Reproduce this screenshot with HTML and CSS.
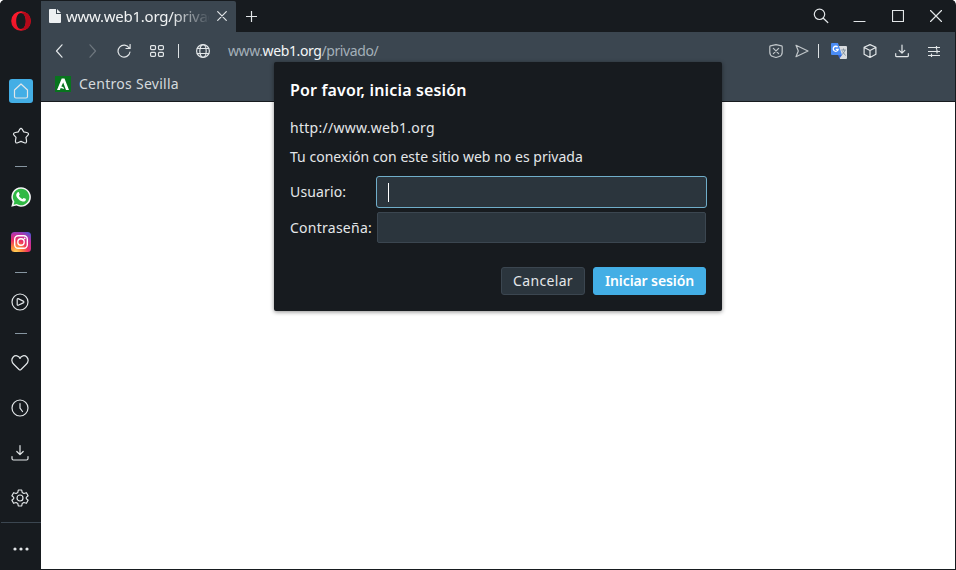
FILE: index.html
```html
<!DOCTYPE html>
<html lang="es">
<head>
<meta charset="utf-8">
<title>www.web1.org/privado/</title>
<link rel="stylesheet" href="styles.css">
</head>
<body>
<div class="window">
  <nav class="sidebar">
    <div class="logo"><svg width="20" height="20" viewBox="0 0 20 20"><defs><linearGradient id="op" x1="0" y1="0" x2="0" y2="1"><stop offset="0" stop-color="#ff1b2d"/><stop offset="1" stop-color="#e81428"/></linearGradient></defs><path fill="url(#op)" fill-rule="evenodd" d="M10 .2a9.800 9.800 0 1 0 0 19.600A9.800 9.800 0 1 0 10 .2zM10 2c2.900 0 4.800 3.400 4.800 8s-1.900 8-4.800 8-4.800-3.400-4.800-8S7.100 2 10 2z"/><path fill="#b50819" d="M10 2C12 .6 15 1 17 3c3.700 4 3.700 10 0 14-2 2-5 2.400-7 1 2.900 0 4.800-3.400 4.800-8S12.900 2 10 2z"/></svg></div>
    <div class="cell"><span class="home"><svg class="line" width="18" height="18" viewBox="0 0 18 18"><path d="M2.500 8 9 2l6.500 6v6.500q0 1.500-1.500 1.500H4q-1.500 0-1.500-1.500z"/></svg></span></div>
    <div class="cell"><svg class="line" width="18" height="18" viewBox="0 0 18 18"><path d="M9 1.300c.7 0 1 .5 1.300 1.100l1.300 2.400 3 .7c1.800.4 2.500 1.400 1.400 2.600l-2 2.200.5 3.200c.3 2-.5 3-2.200 2.200L9 14.400l-3.300 1.300c-1.700.8-2.500-.2-2.200-2.200l.5-3.200-2-2.200C.9 6.900 1.600 5.900 3.400 5.500l3-.7 1.300-2.400C8 1.800 8.300 1.300 9 1.300z"/></svg></div>
    <div class="dash"></div>
    <div class="cell"><svg width="20" height="20" viewBox="0 0 20 20"><path fill="#f4f5f5" d="M10 .2a9.800 9.800 0 1 1-4.600 18.400L.3 19.800l1.300-5A9.800 9.800 0 0 1 10 .2z"/><path fill="#30b944" d="M10 1.800a8.200 8.200 0 1 1-4.300 15.100l-3.100.8.8-3A8.200 8.200 0 0 1 10 1.800z"/><path fill="#fff" d="M6.700 5.300c.4-.4 1-.4 1.200.1l.8 1.900c.1.500-.7 1.200-.8 1.500.6 1.400 1.800 2.500 3.400 3.200.4-.1 1-1.200 1.400-1.100l2 .9c.5.300.1 1.700-.5 2.200-.8.700-2 .8-3.300.3-2.700-.9-5-3.200-5.600-5.300-.3-1.500.5-2.900 1.400-3.700z"/></svg></div>
    <div class="cell"><svg width="20" height="20" viewBox="0 0 20 20"><defs><radialGradient id="ig" cx=".25" cy="1" r="1.150"><stop offset="0" stop-color="#ffd557"/><stop offset=".25" stop-color="#fc8b3c"/><stop offset=".52" stop-color="#ed315f"/><stop offset=".78" stop-color="#bd32a5"/><stop offset="1" stop-color="#5353d0"/></radialGradient></defs><rect width="20" height="20" rx="3.500" fill="url(#ig)"/><g fill="none" stroke="#fff" stroke-width="1.400"><rect x="3.700" y="3.700" width="12.600" height="12.600" rx="3.500"/><circle cx="10" cy="10" r="3.200"/></g><circle cx="13.700" cy="6.300" r=".9" fill="#fff"/></svg></div>
    <div class="dash"></div>
    <div class="cell thin"><svg class="line" width="18" height="18" viewBox="0 0 18 18"><circle cx="9" cy="9" r="8"/><path d="M6.200 6.300q0-1 1-.7l5 2.500q1.400.9 0 1.800l-5 2.300q-1 .3-1-.7z"/></svg></div>
    <div class="dash"></div>
    <div class="cell thin"><svg class="line" width="18" height="18" viewBox="0 0 18 18"><path d="M9 4.500C8 1.400 4.200.9 2.200 3-.2 5.800 1 8.500 3 10.500l5 5q1 .9 2 0l5-5c2-2 3.200-4.700.8-7.500-2-2.100-5.800-1.600-6.800 1.500z"/></svg></div>
    <div class="cell thin"><svg class="line" width="18" height="18" viewBox="0 0 18 18"><circle cx="9" cy="9" r="8"/><path d="M9 4.500v4.700l2.500 3.300"/></svg></div>
    <div class="cell thin"><svg class="line" width="18" height="18" viewBox="0 0 18 18"><path d="M9 1.500v9M5.800 7.500 9 10.700l3.200-3.200M1 12.500v2q0 1.500 1.500 1.500h13q1.500 0 1.500-1.500v-2"/></svg></div>
    <div class="cell thin"><svg class="line" width="18" height="18" viewBox="0 0 18 18"><path d="M7.300 1h3.400l.5 2.500 1.700 1 2.500-.8 1.700 3L15.300 8.400v1.200l1.800 1.700-1.700 3-2.500-.8-1.700 1-.5 2.500H7.300l-.5-2.500-1.700-1-2.500.8-1.700-3 1.800-1.700V8.400L.9 6.700l1.700-3 2.500.8 1.700-1z"/><circle cx="9" cy="9" r="3"/></svg></div>
    <div class="more"><svg width="16" height="4" viewBox="0 0 16 4" fill="#e2e5e7"><circle cx="2" cy="2" r="1.600"/><circle cx="8" cy="2" r="1.600"/><circle cx="14" cy="2" r="1.600"/></svg></div>
  </nav>
  <div class="main">
    <header class="tabs">
      <div class="tab">
        <svg width="12" height="14" viewBox="0 0 12 14"><path fill="#edf0f2" d="M1 0h6v5h5v8q0 1-1 1H1q-1 0-1-1V1q0-1 1-1zM8 0l4 4H8z"/></svg>
        <span class="tab-title">www.web1.org/privado/</span>
        <svg class="line" width="10" height="10" viewBox="0 0 10 10"><path d="m.7.7 8.600 8.600m0-8.600L.7 9.300"/></svg>
      </div>
      <svg class="line plus" width="11" height="11" viewBox="0 0 11 11"><path d="M5.500 0v11M0 5.500h11"/></svg>
      <div class="controls">
        <svg class="line" width="16" height="16" viewBox="0 0 16 16"><circle cx="6.500" cy="6.300" r="5.200"/><path d="m10.300 10.200 4.500 4.300"/></svg>
        <svg class="line" width="14" height="14" viewBox="0 0 14 14"><path d="M2 12.500h11"/></svg>
        <svg class="line square" width="12" height="12" viewBox="0 0 12 12"><path d="M.5.500h11v11H.5z"/></svg>
        <svg class="line" width="12" height="12" viewBox="0 0 12 12"><path d="m.5.500 11 11m0-11-11 11"/></svg>
      </div>
    </header>
    <div class="toolbar">
      <div class="tools">
        <svg class="line" width="14" height="14" viewBox="0 0 14 14"><path d="M9 .8 3.500 7 9 13.200"/></svg>
        <svg class="line faded" width="14" height="14" viewBox="0 0 14 14"><path d="M5 .8 10.500 7 5 13.200"/></svg>
        <svg class="line" width="14" height="14" viewBox="0 0 14 14"><path d="M12.200 4A6 6 0 1 0 13 8M13.100.5V4.500H9"/></svg>
        <svg class="line" width="14" height="12" viewBox="0 0 14 12"><rect x=".6" y=".6" width="4.900" height="4" rx="1"/><rect x="8.500" y=".6" width="4.900" height="4" rx="1"/><rect x=".6" y="7.300" width="4.900" height="4" rx="1"/><rect x="8.500" y="7.300" width="4.900" height="4" rx="1"/></svg>
      </div>
      <i class="bar"></i>
      <svg class="line globe" width="14" height="14" viewBox="0 0 14 14"><circle cx="7" cy="7" r="6.400"/><ellipse cx="7" cy="7" rx="3.200" ry="6.400"/><path d="M1.300 4.500h11.400M1.300 9.500h11.400"/></svg>
      <div class="url">www.<b>web1.org</b>/privado/</div>
      <div class="actions">
        <svg class="line soft" width="14" height="14" viewBox="0 0 14 14"><path d="m7 .6 5.600 1.200q.6.200.6 1v5.400q0 3.300-3 4.300L7 13.500l-3.200-1q-3-1-3-4.300V2.800q0-.8.600-1zM4.400 4.400l5.200 5.200m0-5.200L4.400 9.600"/></svg>
        <svg class="line soft" width="14" height="14" viewBox="0 0 14 14"><path d="M1 1.300 13 7 1 12.700 3.300 7z"/></svg>
        <i class="bar"></i>
        <svg width="16" height="16" viewBox="0 0 16 16"><path fill="#d9dcdf" d="M6 3h9q1 0 1 1v11q0 1-1 1H9z"/><path fill="#3565d5" d="M7 12h4l-2.500 3.500z"/><path fill="#4a8cf5" d="M1 0h6l4 12H1q-1 0-1-1V1q0-1 1-1z"/><path fill="none" stroke="#fff" stroke-width="1.300" d="M6.700 4.200A2.500 2.500 0 1 0 7.200 6.300H4.800"/><path fill="none" stroke="#82919d" d="M10.300 7h4.500M12.500 5.500V7M14 7q-.7 3-3 4.500M11.500 8.500l3 4"/></svg>
        <svg class="line" width="14" height="14" viewBox="0 0 14 14"><path d="m7 .6 5.900 2.700v7L7 13.500l-5.900-3.200v-7zM1.300 3.500 7 6.500l5.700-3M7 6.500v6.800"/></svg>
        <svg class="line" width="14" height="14" viewBox="0 0 14 14"><path d="M7 1v8M4.200 6.300 7 9.100l2.800-2.800M.7 9.700v2q0 1 1 1h10.600q1 0 1-1v-2"/></svg>
        <svg class="line" width="12" height="11" viewBox="0 0 12 11"><path d="M0 1.500h12M0 5.500h12M0 9.500h12M8.500 0v3M9 4v3M3.500 8v3"/></svg>
      </div>
    </div>
    <div class="bookmarks">
      <svg width="16" height="16" viewBox="0 0 16 16"><path fill="#08741e" d="M0 0h16v16H0z"/><path fill="#fff" d="M6.700 2.500h2.800L14 14h-3L8.200 6.500 6.300 10.500l1.900.4 1 2-3.500-.8-.8 1.900H2z"/></svg>
      <span>Centros Sevilla</span>
    </div>
    <div class="page"></div>
  </div>
  <form class="dialog">
    <h1>Por favor, inicia sesión</h1>
    <p class="origin">http://www.web1.org</p>
    <p class="warning">Tu conexión con este sitio web no es privada</p>
    <div class="fields">
      <span class="user-label">Usuario:</span><div class="input focused"><i class="caret"></i></div>
      <span class="pass-label">Contraseña:</span><div class="input"></div>
    </div>
    <div class="buttons"><button type="button" class="cancel"><span>Cancelar</span></button><button type="button" class="primary"><span>Iniciar sesión</span></button></div>
  </form>
</div>
</body>
</html>
```
FILE: styles.css
```css
* { box-sizing: border-box; }
body { margin: 0; background: #fff; font: 15px/20px "Noto Sans", sans-serif; color: #e4e7e9; overflow: hidden; }
svg { display: block; flex: none; }
.window { position: relative; display: flex; width: 956px; height: 570px; background: #171b1f; border-radius: 5px 5px 0 0; overflow: hidden; }
.line { fill: none; stroke: #e2e6e8; stroke-width: 1.2; stroke-linejoin: round; stroke-linecap: round; }
.sidebar { width: 41px; flex: none; display: flex; flex-direction: column; background: #171b1f; }
.logo { height: 68px; padding: 11px 0 0 11px; }
.cell { height: 45px; display: flex; align-items: center; justify-content: center; }
.thin { padding: 0 1px 1px 0; }
.home { width: 24px; height: 24px; border-radius: 3px; background: #43aee5; display: flex; align-items: center; justify-content: center; }
.dash { height: 16px; display: flex; align-items: center; justify-content: center; }
.dash::before { content: ""; width: 12px; height: 1px; background: #8796a1; }
.more { flex: 1; margin: 1px 0 1px 1px; border-top: 1px solid #3b4650; display: flex; align-items: center; justify-content: center; padding-top: 6px; }
.main { flex: 1; min-width: 0; display: flex; flex-direction: column; padding: 0 1px 1px 0; }
.tabs { height: 32px; display: flex; align-items: center; background: #171b1f; padding-top: 1px; }
.tab { width: 195px; height: 31px; background: #3b4650; display: flex; align-items: center; padding: 0 8px 1px; border-radius: 0 2px 0 0; }
.tab-title { width: 143px; margin: 0 7px 0 5px; overflow: hidden; white-space: nowrap; color: #f1f3f4; letter-spacing: -.25px; mask-image: linear-gradient(90deg, #000 105px, transparent 145px); }
.tab > .line { margin-left: 1px; }
.plus { margin: 0 0 1px 10px; }
.controls { margin-left: auto; display: grid; grid-template-columns: repeat(4, 38.3px); justify-items: center; align-items: center; padding-bottom: 1px; }
.toolbar { height: 35px; background: #3b4650; display: flex; align-items: center; padding-top: 3px; }
.tools { width: 130px; margin-left: 3px; display: grid; grid-template-columns: repeat(4, 32.2px); justify-items: center; align-items: center; }
.faded { opacity: .3; }
.soft { opacity: .8; }
.bar { width: 1px; height: 14px; background: #dce1e4; }
.tools + .bar { margin-left: 4px; }
.globe { margin: 0 18px 0 17px; }
.url { color: #a4b0b9; font-size: 14px; letter-spacing: -.4px; }
.url b { color: #f4f6f7; font-weight: 400; }
.actions { margin-left: auto; display: grid; grid-template-columns: 28px 24px 8px 33px 29px 35px 30px; justify-items: center; align-items: center; margin-right: 6px; }
.bookmarks { height: 35px; background: #3b4650; border-bottom: 1px solid #171b1f; display: flex; align-items: center; padding: 0 0 1px 14px; gap: 8px; color: #d5dadd; font-size: 14px; letter-spacing: .27px; }
.page { flex: 1; background: #fff; }
.dialog { position: absolute; left: 274px; top: 62px; width: 448px; height: 249px; padding: 17px 16px 16px; background: #171b1f; border-radius: 2px; box-shadow: 0 1px 4px rgba(0,0,0,.45); font-size: 14px; }
h1, p { margin: 0; white-space: nowrap; }
h1 { font-size: 16px; line-height: 22px; font-weight: 600; letter-spacing: .16px; color: #fff; }
.origin { margin-top: 17px; letter-spacing: .27px; }
.warning { margin-top: 9px; letter-spacing: .02px; }
.user-label { letter-spacing: .15px; }
.pass-label { letter-spacing: .25px; }
.fields { display: grid; grid-template-columns: 86px 331px; grid-template-rows: 32px 31px; row-gap: 4px; align-items: center; margin-top: 9px; white-space: nowrap; }
.input { width: 329px; height: 31px; margin-left: 1px; border: 1px solid #3b4650; border-radius: 2px; background: #2b353d; }
.focused { width: 331px; height: 32px; margin-left: 0; border: 1px solid #70aeca; border-radius: 3px; display: flex; align-items: center; padding-left: 11px; }
.caret { width: 1px; height: 19px; background: #fff; }
.buttons { display: flex; justify-content: flex-end; gap: 8px; margin-top: 24px; }
button { height: 28px; padding: 0; border: 1px solid #3b4650; border-radius: 3px; background: #2b353d; color: #e4e7e9; font: 14px/20px "Noto Sans", sans-serif; white-space: nowrap; }
.cancel { width: 84px; letter-spacing: .35px; }
.primary { width: 113px; background: #43aee5; border-color: #43aee5; color: #fff; font-weight: 600; letter-spacing: -.1px; }
```
